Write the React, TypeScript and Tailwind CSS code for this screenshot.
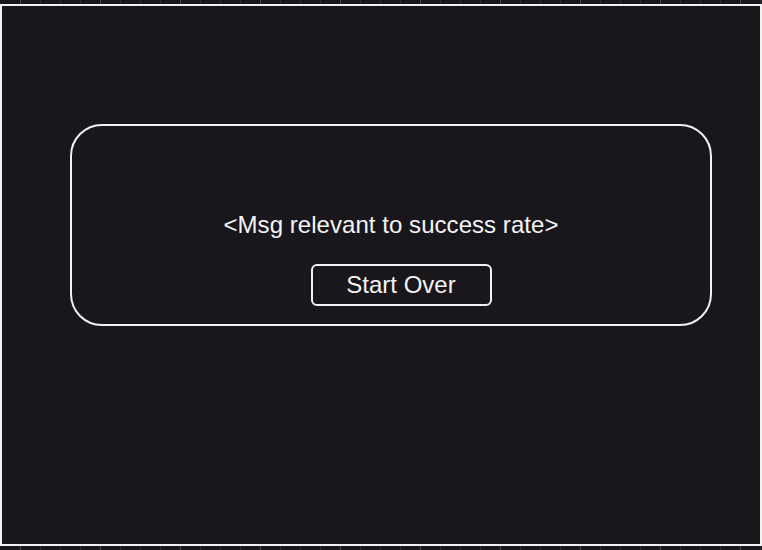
const ticks = Array.from({ length: 39 }, (_, i) => i);

function TickStrip() {
  return (
    <div className="flex h-[4px] w-full overflow-hidden bg-[#19171c]">
      <div className="w-[20px] shrink-0" />
      {ticks.map((i) => (
        <div
          key={i}
          className={`h-full w-[20px] shrink-0 border-l ${
            i % 4 === 0 ? "border-[#4a494f]" : "border-[#2f2e34]"
          }`}
        />
      ))}
    </div>
  );
}

export default function App() {
  return (
    <div
      className="h-[550px] w-[762px] overflow-hidden bg-[#19171c] text-[#f4f4f5]"
      style={{ fontFamily: '"Liberation Sans", Arial, sans-serif' }}
    >
      <TickStrip />
      <div className="h-[542px] w-full border-2 border-[#f2f2f2] bg-[#19171c]">
        <div className="ml-[68px] mt-[118px] flex h-[202px] w-[642px] flex-col items-center rounded-[32px] border-2 border-[#f2f2f2] pt-[85px]">
          <p className="text-[24px] leading-[28px] tracking-[0.05px]">
            &lt;Msg relevant to success rate&gt;
          </p>
          <button className="ml-[20px] mt-[25px] flex h-[42px] w-[181px] items-center justify-center rounded-[6px] border-2 border-[#f2f2f2] text-[24px] leading-[28px]">
            Start Over
          </button>
        </div>
      </div>
      <TickStrip />
    </div>
  );
}
